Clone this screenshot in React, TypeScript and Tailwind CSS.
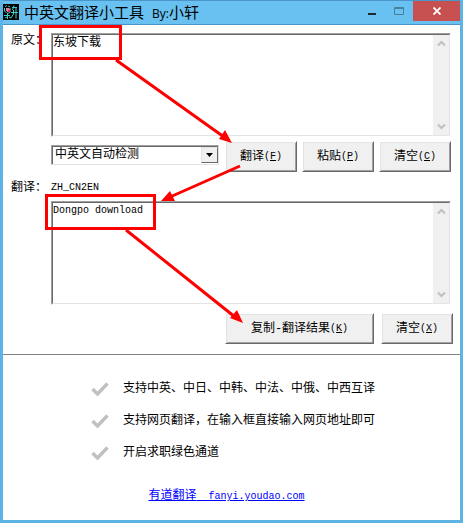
import { useState } from 'react';

const uiFont = 'font-["Liberation_Mono","Noto_Sans_CJK_SC",monospace]';

interface ActionButtonProps {
  label: string;
  hotkey: string;
  className?: string;
  onClick?: () => void;
}

const ActionButton = ({ label, hotkey, className = 'w-[72px]', onClick }: ActionButtonProps) => (
  <button
    type="button"
    onClick={onClick}
    className={`flex h-[31px] shrink-0 items-center justify-center whitespace-nowrap border border-t-white border-l-white border-r-[#696969] border-b-[#696969] bg-[#f0f0f0] shadow-[inset_1px_1px_0_#e3e3e3,inset_-1px_-1px_0_#a0a0a0] ${className}`}
  >
    {label}
    <span className="text-[10px]">
      (<u>{hotkey}</u>)
    </span>
  </button>
);

const Chevron = ({ up = false }: { up?: boolean }) => (
  <svg width="9" height="7" viewBox="0 0 9 7" fill="none" stroke="#bfbfbf" strokeWidth="2">
    <path d={up ? 'M1 5.5 4.5 2 8 5.5' : 'M1 1.5 4.5 5 8 1.5'} />
  </svg>
);

interface TextPanelProps {
  label: string;
  value: string;
  onChange: (value: string) => void;
  className?: string;
}

const TextPanel = ({ label, value, onChange, className = '' }: TextPanelProps) => (
  <div className="flex h-[104px] min-w-0 flex-1 border border-t-[#a0a0a0] border-l-[#a0a0a0] border-r-white border-b-white">
    <div className="flex min-w-0 flex-1 border border-t-[#696969] border-l-[#696969] border-r-[#e3e3e3] border-b-[#e3e3e3]">
      <textarea
        aria-label={label}
        value={value}
        onChange={e => onChange(e.target.value)}
        className={`min-w-0 flex-1 resize-none overflow-hidden leading-4 outline-none ${className}`}
      />
      <div className="flex w-4 flex-col items-center justify-between bg-[#f0f0f0] py-[5px]">
        <Chevron up />
        <Chevron />
      </div>
    </div>
  </div>
);

const features = [
  '支持中英、中日、中韩、中法、中俄、中西互译',
  '支持网页翻译，在输入框直接输入网页地址即可',
  '开启求职绿色通道'
];

const TitleBar = () => (
  <header className="flex h-[25px] items-start border-y border-[#4a96c8] bg-[#68c1f0]">
    <svg className="mt-[3px] shrink-0" width="16" height="16" viewBox="0 0 16 16">
      <rect width="16" height="16" fill="#000" />
      <g fill="none" stroke="#3fd0c8">
        <path d="M2 2.5 4 1.500M5 2l2 1M1.500 4v3l2 2M7 4v4L5 9.500M1 11.500h6M4.500 9v6M2 14l2-1M6 13l2 1" />
        <path d="M9 3.500h5M11 1.500 9.500 6M8 8.500h7M10.500 6v4L8 14M13 4v10.500" />
      </g>
      <path d="M3 4h3v1h1v3H4V7H3z" fill="#e87ba8" />
      <path d="M5 6h2v2H5z" fill="#d8284c" />
    </svg>
    <h1 className='ml-[5px] flex-1 whitespace-nowrap font-["Open_Sans","Noto_Sans_CJK_SC",sans-serif] text-[15px] leading-[23px] text-black'>
      中英文翻译小工具
      <span className="ml-2 text-[12px]">By:</span>小轩
    </h1>
    <button type="button" aria-label="Minimize" className="flex h-5 w-6 items-center justify-center">
      <svg width="8" height="20" viewBox="0 0 8 20">
        <path d="M0 12h8v2H0z" fill="#1f2a30" />
      </svg>
    </button>
    <button type="button" aria-label="Maximize" className="flex h-5 w-[29px] items-center justify-center">
      <svg width="10" height="20" viewBox="0 0 10 20" fill="none" stroke="#45809f">
        <path d="M.5 6.5h9v7h-9zM0 7.500h10" />
      </svg>
    </button>
    <button type="button" aria-label="Close" className="flex h-5 w-[47px] items-center justify-center bg-[#c75050]">
      <svg width="8" height="8" viewBox="0 0 8 8" stroke="#fff" strokeWidth="1.8">
        <path d="m.5.5 7 7M7.5.5l-7 7" />
      </svg>
    </button>
  </header>
);

// Red boxes and arrows that walk through the translate steps
const StepMarks = () => (
  <svg
    className="pointer-events-none absolute top-0 -left-[3px]"
    width="463"
    height="523"
    viewBox="0 0 463 523"
    fill="none"
    stroke="#f00"
    strokeWidth="3"
  >
    <path d="M40.5 26.5h80v32h-80zM46.5 195.5h108v33h-108z" />
    <path d="m116 60 108 77M240 166l-70 31M126 230l109 87" />
    <g fill="#f00" stroke="none">
      <path d="m232 143-13-4 6-9z" />
      <path d="m161 201 9-10 5 10z" />
      <path d="m243 323-13-5 7-8z" />
    </g>
  </svg>
);

export default function App() {
  const [source, setSource] = useState('东坡下载');
  const [result, setResult] = useState('Dongpo download');

  return (
    <div className={`relative flex min-h-screen flex-col border-x-[3px] border-b-[3px] border-x-[#5db3e4] border-b-[#5db3e4] bg-white text-[12px] leading-4 text-black ${uiFont}`}>
      <TitleBar />
      <main className="flex flex-1 flex-col">
        <section className="flex pt-2 pr-[9px] pl-2">
          <span className="w-10 shrink-0">原文：</span>
          <TextPanel label="原文" value={source} onChange={setSource} />
        </section>
        <section className="flex items-start gap-[5px] pt-1 pr-[9px] pl-12">
          <div className="relative mt-1 mr-px min-w-0 flex-1">
            <select
              aria-label="翻译语言"
              className="block h-5 w-full appearance-none border border-t-[#a0a0a0] border-l-[#a0a0a0] border-r-[#e3e3e3] border-b-[#e3e3e3] bg-white pl-[3px] shadow-[inset_1px_1px_0_#696969] outline-none"
            >
              <option>中英文自动检测</option>
            </select>
            <span className="pointer-events-none absolute top-0.5 right-px flex h-4 w-[17px] items-center justify-center border border-t-[#e3e3e3] border-l-[#e3e3e3] border-r-[#696969] border-b-[#696969] bg-[#f0f0f0]">
              <svg width="7" height="4" viewBox="0 0 7 4">
                <path d="M0 0h7L3.500 4z" />
              </svg>
            </span>
          </div>
          <ActionButton label="翻译" hotkey="F" />
          <ActionButton label="粘贴" hotkey="P" />
          <ActionButton label="清空" hotkey="C" onClick={() => setSource('')} />
        </section>
        <section className="flex items-center pt-2 pl-2">
          <span className="w-10 shrink-0">翻译：</span>
          <span className="text-[10px]">ZH_CN2EN</span>
        </section>
        <section className="flex pt-[5px] pr-[9px] pl-12">
          <TextPanel label="翻译" value={result} onChange={setResult} className="text-[10px]" />
        </section>
        <section className="flex justify-end gap-[7px] pt-2 pr-[7px] pb-2.5">
          <ActionButton label="复制-翻译结果" hotkey="K" className="w-[149px]" />
          <ActionButton label="清空" hotkey="X" onClick={() => setResult('')} />
        </section>
        <hr className="border-[#808080]" />
        <ul className="flex flex-col gap-4 pt-[26px] pl-[88px]">
          {features.map(feature => (
            <li key={feature} className="flex items-center gap-3.5 whitespace-nowrap">
              <svg className="shrink-0" width="18" height="14" viewBox="0 0 18 14" fill="none" stroke="#c0c0c0" strokeWidth="3.500">
                <path d="m1.500 7 5 5L16.500 1.500" />
              </svg>
              {feature}
            </li>
          ))}
        </ul>
        <footer className="pt-[27px] pr-2.5 text-center">
          <a href="https://fanyi.youdao.com" className="whitespace-pre text-[#0000ff] underline">
            有道翻译<span className="text-[10px]">{'  fanyi.youdao.com'}</span>
          </a>
        </footer>
      </main>
      <StepMarks />
    </div>
  );
}
